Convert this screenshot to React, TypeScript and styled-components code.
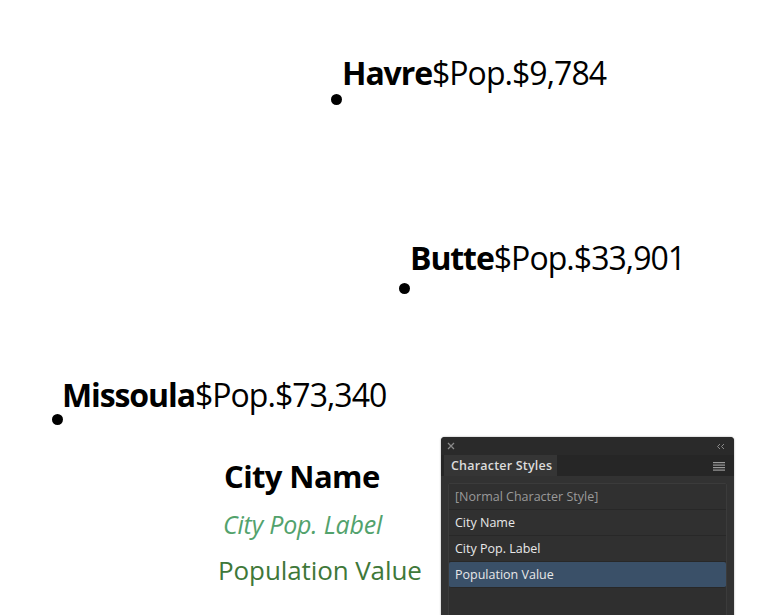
import styled, { createGlobalStyle } from "styled-components";

const GlobalStyle = createGlobalStyle`
    html, body {
        margin: 0;
        padding: 0;
        background: #ffffff;
        overflow: hidden;
    }
`;

const Canvas = styled.div`
    position: relative;
    width: 768px;
    height: 615px;
    background: #ffffff;
    font-family: "Open Sans", "Noto Sans", sans-serif;
    overflow: hidden;
`;

// a pin is placed on the map by its label's top-left corner
const Pin = styled.div<{ $x: number; $y: number }>`
    position: absolute;
    left: ${(p) => p.$x}px;
    top: ${(p) => p.$y}px;
`;

const Dot = styled.span<{ $dx: number; $dy: number }>`
    position: absolute;
    left: ${(p) => p.$dx - 5.5}px;
    top: ${(p) => p.$dy - 5.5}px;
    width: 11px;
    height: 11px;
    border-radius: 50%;
    background: #000;
`;

const Label = styled.div`
    font-size: 32px;
    line-height: 40px;
    color: #000;
    letter-spacing: -0.95px;
    white-space: nowrap;
`;

const City = styled.span`
    font-weight: 700;
    letter-spacing: -1.1px;
`;

const Legend = styled.div`
    display: flex;
    flex-direction: column;
    align-items: flex-start;
    padding: 454px 0 0 218px;
`;

const Sample = styled.div<{ $kind: "name" | "label" | "value" }>`
    white-space: nowrap;
    ${(p) =>
        p.$kind === "name"
            ? `font-size: 31px; font-weight: 700; color: #000; line-height: 44px; padding-left: 6px; letter-spacing: -0.6px;`
            : p.$kind === "label"
            ? `font-size: 25px; font-style: italic; font-weight: 400; color: #52a26c; line-height: 52px; padding-left: 5px; letter-spacing: -0.2px;`
            : `font-size: 26px; font-weight: 400; color: #3f7839; line-height: 40px; letter-spacing: -0.1px;`}
`;

const Panel = styled.div`
    position: absolute;
    left: 441px;
    top: 437px;
    width: 293px;
    height: 190px;
    background: #323232;
    border-radius: 4px 4px 0 0;
    font-family: "Open Sans", "DejaVu Sans", sans-serif;
    display: flex;
    flex-direction: column;
    overflow: hidden;
    box-shadow: 0 0 2px rgba(0, 0, 0, 0.4);
`;

const TitleBar = styled.div`
    flex-shrink: 0;
    height: 18px;
    display: flex;
    align-items: center;
    justify-content: space-between;
    padding: 0 9px 0 6px;
    background: #2a2a2a;
`;

const TabStrip = styled.div`
    flex-shrink: 0;
    height: 21px;
    display: flex;
    align-items: stretch;
    justify-content: space-between;
    background: #262626;
    padding-right: 9px;
`;

const Tab = styled.div`
    box-sizing: border-box;
    width: 113px;
    margin-left: 3px;
    padding: 0 6px 0 7px;
    background: #353535;
    color: #dcdcdc;
    font-size: 12.5px;
    font-weight: 600;
    letter-spacing: 0.2px;
    white-space: nowrap;
    display: flex;
    align-items: center;
`;

const Body = styled.div`
    padding: 7px 7px 0 7px;
`;

const List = styled.div`
    border: 1px solid #3b3b3b;
    border-radius: 2px;
    background: #2f2f2f;
    height: 200px;
`;

const Row = styled.div<{ $selected?: boolean; $muted?: boolean }>`
    height: 25px;
    display: flex;
    align-items: center;
    padding-left: 6px;
    font-size: 12.5px;
    font-weight: 500;
    color: ${(p) => (p.$muted ? "#9a9a9a" : "#e8e8e8")};
    background: ${(p) => (p.$selected ? "#3a5068" : "#303030")};
    border-bottom: 1px solid #282828;
    border-radius: ${(p) => (p.$selected ? "2px" : "0")};
`;

const MenuIcon = () => (
    <svg width="12" height="10" viewBox="0 0 12 10" style={{ alignSelf: "center" }}>
        <rect x="0" y="1" width="12" height="1.2" fill="#9a9a9a" />
        <rect x="0" y="3.5" width="12" height="1.2" fill="#9a9a9a" />
        <rect x="0" y="6" width="12" height="1.2" fill="#9a9a9a" />
        <rect x="0" y="8.5" width="12" height="1.2" fill="#9a9a9a" />
    </svg>
);

const CloseIcon = () => (
    <svg width="8" height="8" viewBox="0 0 8 8">
        <path d="M1 1L7 7M7 1L1 7" stroke="#8a8a8a" strokeWidth="1.3" />
    </svg>
);

const CollapseIcon = () => (
    <svg width="9" height="7" viewBox="0 0 9 7">
        <path d="M4 1L1.5 3.5L4 6M8 1L5.5 3.5L8 6" stroke="#8a8a8a" strokeWidth="1" fill="none" />
    </svg>
);

const cities = [
    { name: "Havre", pop: "9,784", x: 342, y: 53, dot: [336, 99] },
    { name: "Butte", pop: "33,901", x: 410, y: 238, dot: [404, 288] },
    { name: "Missoula", pop: "73,340", x: 62, y: 375, dot: [57, 419] },
];

const App = () => {
    return (
        <>
            <GlobalStyle />
            <Canvas>
                {cities.map((c) => (
                    <Pin key={c.name} $x={c.x} $y={c.y}>
                        <Label>
                            <City>{c.name}</City>$Pop.${c.pop}
                        </Label>
                        <Dot $dx={c.dot[0] - c.x} $dy={c.dot[1] - c.y} />
                    </Pin>
                ))}
                <Legend>
                    <Sample $kind="name">City Name</Sample>
                    <Sample $kind="label">City Pop. Label</Sample>
                    <Sample $kind="value">Population Value</Sample>
                </Legend>
                <Panel>
                    <TitleBar>
                        <CloseIcon />
                        <CollapseIcon />
                    </TitleBar>
                    <TabStrip>
                        <Tab>Character Styles</Tab>
                        <MenuIcon />
                    </TabStrip>
                    <Body>
                        <List>
                            <Row $muted>[Normal Character Style]</Row>
                            <Row>City Name</Row>
                            <Row>City Pop. Label</Row>
                            <Row $selected>Population Value</Row>
                        </List>
                    </Body>
                </Panel>
            </Canvas>
        </>
    );
};

export default App;
